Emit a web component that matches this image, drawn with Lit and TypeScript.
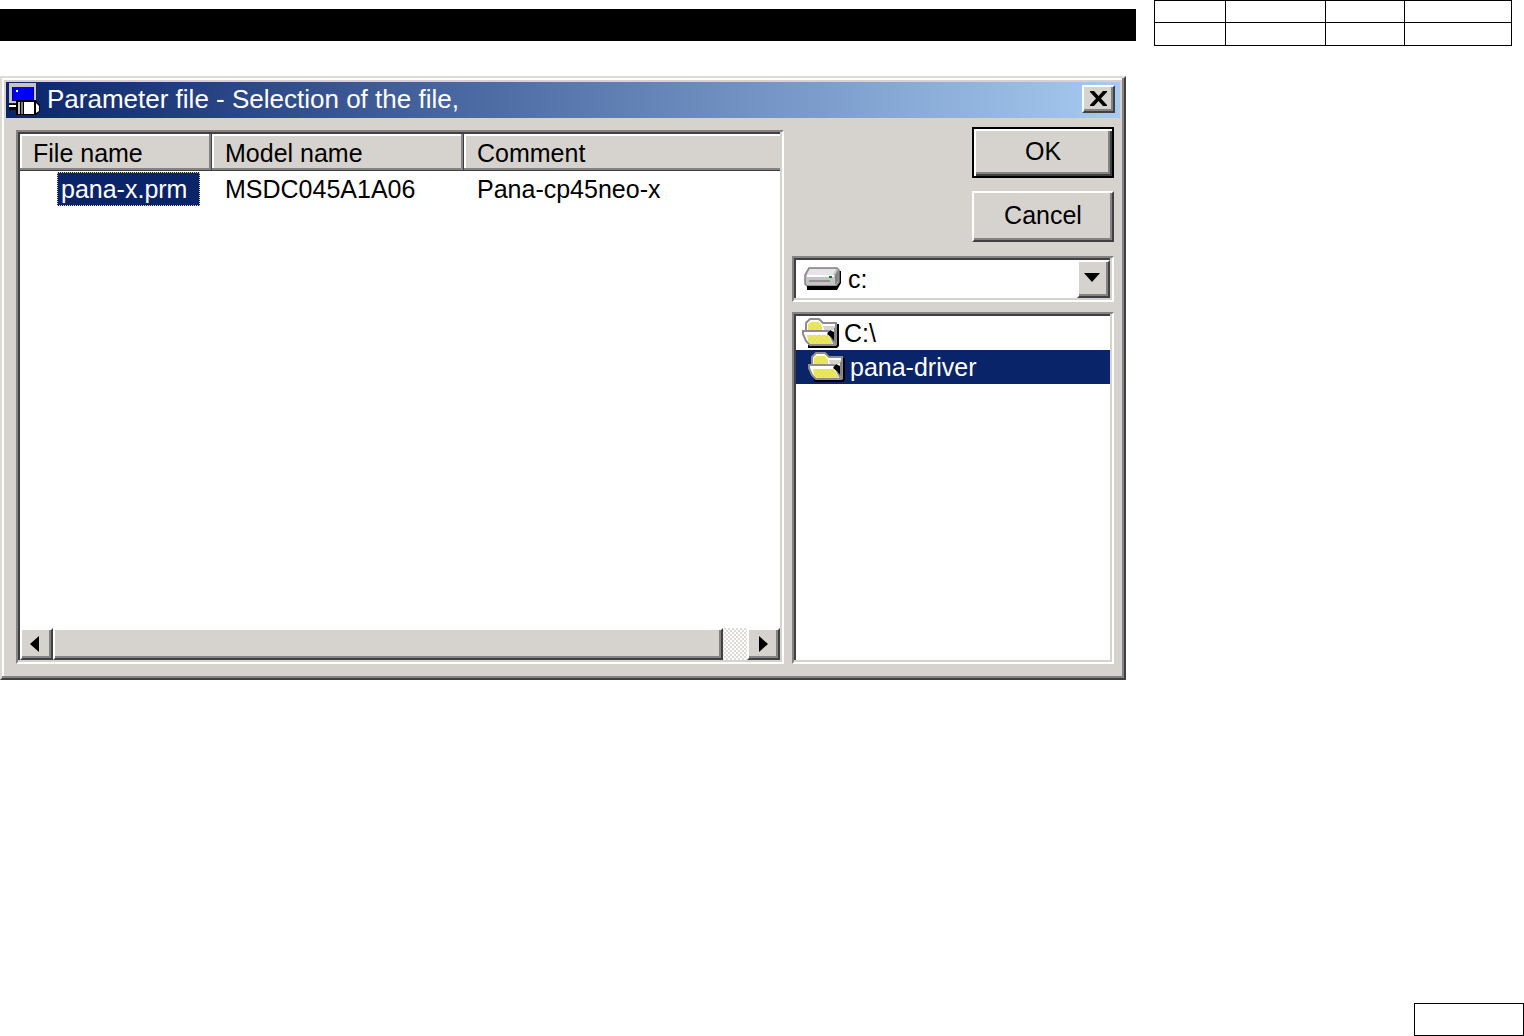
import { LitElement, html, css } from "lit";
import { customElement, property, state } from "lit/decorators.js";
import { classMap } from "lit/directives/class-map.js";

const bevels = css`
  .raised {
    background: #d6d3ce;
    border: 2px solid;
    border-color: #fff #404040 #404040 #fff;
    box-shadow: inset -2px -2px #848284;
  }
  .sunken {
    background: #fff;
    border: 2px solid;
    border-color: #848284 #fff #fff #848284;
    box-shadow: inset -2px -2px #d6d3ce, inset 2px 2px #404040;
    padding: 2px;
  }
  * {
    box-sizing: border-box;
  }
  button,
  select {
    font: inherit;
    color: inherit;
    margin: 0;
    border-radius: 0;
  }
  svg {
    display: block;
    flex: none;
  }
`;

@customElement("folder-icon")
class FolderIcon extends LitElement {
  static styles = css`
    :host {
      display: block;
      flex: none;
    }
    svg {
      display: block;
    }
  `;
  render() {
    return html`<svg width="37" height="30" viewBox="0 0 37 30" aria-hidden="true">
      <defs>
        <pattern id="dither" width="4.600" height="4.600" patternUnits="userSpaceOnUse">
          <rect width="4.600" height="4.600" fill="#f7f31c" />
          <rect width="2.300" height="2.300" fill="#d9d6a0" />
          <rect x="2.300" y="2.300" width="2.300" height="2.300" fill="#d9d6a0" />
        </pattern>
      </defs>
      <path d="M6 30V27h26V6h5v22l-2 2z" fill="#000" />
      <path d="M4 14V5l4-4h9l4 4h13v21H8z" fill="#fff" stroke="#8e8c8e" stroke-width="2" />
      <path d="M6 11V6l3-2h8l3 4v4H6z" fill="url(#dither)" />
      <path d="M21 8h12v4H22z" fill="#d6d3ce" />
      <path d="M32 10h2v14h-2z" fill="#848284" />
      <path d="M1 13h25l7 14H8l-4-4-3-7z" fill="#fff" stroke="#8e8c8e" stroke-width="2" />
      <path d="M5 17h21l5 9H9l-3-3z" fill="url(#dither)" />
      <path d="M28 12l4 2v9l-3-4-4-3z" fill="#000" />
    </svg>`;
  }
}

@customElement("win-scrollbar")
class WinScrollbar extends LitElement {
  static styles = [
    bevels,
    css`
      :host {
        display: flex;
        height: 32px;
        background: repeating-conic-gradient(#fff 0 25%, #dedbd6 0 50%) 0 0 / 4px 4px;
      }
      .arrow {
        width: 33px;
        padding: 0 4px 0 0;
        display: flex;
        align-items: center;
        justify-content: center;
      }
      .forward {
        padding: 0;
      }
      .thumb {
        flex: 1;
        margin-right: 24px;
      }
    `,
  ];
  render() {
    return html`
      <button class="raised arrow" aria-label="Scroll left">
        <svg width="9" height="16" viewBox="0 0 9 16"><path d="M9 0v16L0 8z" /></svg>
      </button>
      <div class="raised thumb"></div>
      <button class="raised arrow forward" aria-label="Scroll right">
        <svg width="9" height="16" viewBox="0 0 9 16"><path d="M0 0v16l9-8z" /></svg>
      </button>
    `;
  }
}

interface FileRow {
  name: string;
  model: string;
  comment: string;
}

@customElement("file-list")
class FileList extends LitElement {
  @property({ attribute: false }) files: FileRow[] = [];
  @state() private selected = 0;

  static styles = [
    bevels,
    css`
      :host {
        display: flex;
        min-width: 0;
      }
      .list {
        flex: 1;
        min-width: 0;
        min-height: 534px;
        display: flex;
        flex-direction: column;
      }
      .rows {
        flex: 1;
      }
      table {
        width: 100%;
        table-layout: fixed;
        border-collapse: collapse;
        line-height: 34px;
      }
      .name {
        width: 192px;
      }
      .model {
        width: 252px;
      }
      th {
        height: 37px;
        padding: 0 0 0 13px;
        text-align: left;
        font-weight: normal;
        background: #d6d3ce;
        box-shadow: inset -1px -1px #404040, inset -3px -3px #848284, inset 2px 2px #fff;
      }
      th:last-child {
        box-shadow: inset 0 -1px #404040, inset 0 -3px #848284, inset 2px 2px #fff;
      }
      td {
        height: 36px;
        padding: 0 0 0 13px;
      }
      .file {
        padding-left: 37px;
      }
      .pick {
        display: block;
        height: 34px;
        line-height: 32px;
        padding: 0 12px 0 3px;
        background: none;
        border: 1px dotted transparent;
        outline: none;
      }
      .pick.on {
        background: #0a246a;
        border: 1px dotted #f5db95;
        color: #fff;
      }
    `,
  ];

  render() {
    return html`<div class="sunken list">
      <div class="rows">
        <table>
          <thead>
            <tr>
              <th class="name">File name</th>
              <th class="model">Model name</th>
              <th>Comment</th>
            </tr>
          </thead>
          <tbody>
            ${this.files.map(
              (f, i) => html`<tr>
                <td class="file">
                  <button
                    class=${classMap({ pick: true, on: i === this.selected })}
                    @click=${() => (this.selected = i)}
                  >${f.name}</button>
                </td>
                <td>${f.model}</td>
                <td>${f.comment}</td>
              </tr>`
            )}
          </tbody>
        </table>
      </div>
      <win-scrollbar></win-scrollbar>
    </div>`;
  }
}

@customElement("location-picker")
class LocationPicker extends LitElement {
  @state() private current = 1;
  private folders = ["C:\\", "pana-driver"];

  static styles = [
    bevels,
    css`
      :host {
        flex: 1;
        display: flex;
        flex-direction: column;
        gap: 10px;
      }
      .drive {
        height: 46px;
        display: flex;
        align-items: center;
        padding-left: 10px;
      }
      .letter {
        flex: 1;
        min-width: 0;
        height: 38px;
        padding: 0 0 0 7px;
        appearance: none;
        border: none;
        outline: none;
        background: none;
      }
      .drop {
        width: 33px;
        height: 38px;
        padding: 0 4px 4px 0;
        display: flex;
        align-items: center;
        justify-content: center;
      }
      .tree {
        flex: 1;
        display: flex;
        flex-direction: column;
      }
      .folder {
        height: 34px;
        padding: 0 0 0 6px;
        display: flex;
        align-items: center;
        gap: 5px;
        border: none;
        outline: none;
        background: none;
        text-align: left;
      }
      .child {
        padding-left: 12px;
      }
      .on {
        background: #0a246a;
        color: #fff;
      }
    `,
  ];

  render() {
    return html`
      <div class="sunken drive">
        <svg width="37" height="24" viewBox="0 0 37 24" aria-hidden="true">
          <path d="M3 17h28l3-3V4h3v12l-4 7H3z" fill="#000" />
          <path d="M5 1h28l2 2v12l-3 4H3l-2-2V8z" fill="#c6c3c6" stroke="#848284" stroke-width="1.5" />
          <path d="M6 2h26l-3 6H3z" fill="#e6e4e6" />
          <path d="M3 9h27" stroke="#fff" stroke-width="2" />
          <path d="M5 14h21" stroke="#848284" stroke-width="1.5" />
          <path d="M31 8l3-5v11l-3 4z" fill="#848284" />
          <path d="M25 9h3v2h-3z" fill="#008a10" />
          <path d="M3 19h30v4H3z" fill="#000" />
        </svg>
        <select class="letter" aria-label="Drive">
          <option>c:</option>
        </select>
        <button class="raised drop" aria-label="Open drive list">
          <svg width="16" height="9" viewBox="0 0 16 9"><path d="M0 0h16L8 9z" /></svg>
        </button>
      </div>
      <div class="sunken tree">
        ${this.folders.map(
          (name, i) => html`<button
            class=${classMap({ folder: true, child: i > 0, on: i === this.current })}
            @click=${() => (this.current = i)}
          ><folder-icon></folder-icon><span>${name}</span></button>`
        )}
      </div>
    `;
  }
}

@customElement("app-root")
class AppRoot extends LitElement {
  private files: FileRow[] = [
    { name: "pana-x.prm", model: "MSDC045A1A06", comment: "Pana-cp45neo-x" },
  ];

  static styles = [
    bevels,
    css`
      :host {
        display: block;
        background: #fff;
        color: #000;
        font-family: "Liberation Sans", Arial, sans-serif;
        font-size: 25px;
      }
      .page {
        min-height: 100vh;
        display: flex;
        flex-direction: column;
      }
      .main {
        display: grid;
        grid-template-columns: minmax(0, 1fr) 358px;
        column-gap: 18px;
        row-gap: 30px;
        padding-right: 12px;
      }
      .band {
        height: 32px;
        margin-top: 9px;
        background: #000;
      }
      .stamp {
        width: 100%;
        table-layout: fixed;
        border-collapse: collapse;
      }
      .stamp td {
        height: 23px;
        padding: 0;
        border: 1px solid #000;
      }
      .stamp tr:first-child td {
        height: 22px;
      }
      .c1 {
        width: 71px;
      }
      .c2 {
        width: 100px;
      }
      .c3 {
        width: 79px;
      }
      .dialog {
        margin-right: 10px;
        background: #d6d3ce;
        border: 2px solid;
        border-color: #dedbd6 #404040 #404040 #dedbd6;
        box-shadow: inset -2px -2px #848284, inset 2px 2px #fff;
        padding: 4px;
      }
      .title {
        height: 36px;
        display: flex;
        align-items: center;
        gap: 7px;
        padding: 0 5px 2px 3px;
        background: linear-gradient(90deg, #0a246a, #a6caf0);
        color: #fff;
      }
      h1 {
        flex: 1;
        margin: 0;
        font-size: 26px;
        line-height: 32px;
        font-weight: normal;
        white-space: nowrap;
      }
      .close {
        width: 33px;
        height: 28px;
        padding: 0 1px 2px 0;
        display: flex;
        align-items: center;
        justify-content: center;
      }
      .body {
        display: flex;
        gap: 8px;
        padding: 9px 6px 10px 10px;
      }
      .files {
        flex: 1;
        margin-top: 3px;
      }
      .side {
        width: 322px;
        display: flex;
        flex-direction: column;
      }
      .actions {
        display: flex;
        flex-direction: column;
        align-items: flex-end;
        gap: 13px;
        margin-bottom: 14px;
      }
      .action {
        width: 142px;
        height: 51px;
        padding: 0 0 2px;
      }
      .default {
        border-color: #000;
        box-shadow: inset 2px 2px #fff, inset -2px -2px #404040, inset -4px -4px #848284;
      }
      .foot {
        width: 110px;
        height: 33px;
        margin: auto 0 0 auto;
        border: 1px solid #000;
      }
    `,
  ];

  render() {
    return html`<div class="page">
      <div class="main">
        <div class="band"></div>
        <table class="stamp">
          <colgroup>
            <col class="c1" /><col class="c2" /><col class="c3" /><col />
          </colgroup>
          <tbody>
            <tr><td></td><td></td><td></td><td></td></tr>
            <tr><td></td><td></td><td></td><td></td></tr>
          </tbody>
        </table>
        <section class="dialog">
          <header class="title">
            <svg width="31" height="32" viewBox="0 0 31 32" aria-hidden="true">
              <path d="M0 0h27v20H0z" fill="#c6c3c6" />
              <path d="M3 4h22v14H3z" fill="#000084" />
              <path d="M4 4h20v13H4z" fill="#00f" />
              <path d="M7 7h2v2H7z" fill="#fff" />
              <path d="M0 21h8v6H0z" fill="#000" />
              <path d="M0 22h7v2H0z" fill="#fff" />
              <path d="M7 17h20l1 2 3 3v6l-3 3-1 1H7z" fill="#000" />
              <path d="M9 19h2v12H9z" fill="#c6c3c6" />
              <path d="M12 19h2v12h-2z" fill="#848284" />
              <path d="M15 19h10v12H15z" fill="#fff" />
              <path d="M27 20l3 3v5l-3 2z" fill="#fff" />
            </svg>
            <h1>Parameter file - Selection of the file,</h1>
            <button class="raised close" aria-label="Close">
              <svg width="17" height="15" viewBox="0 0 17 15">
                <path d="M0 0h4l4.500 5L13 0h4v1l-6 6.500 6 6.500v1h-4l-4.500-5L4 15H0v-1l6-6.500L0 1z" />
              </svg>
            </button>
          </header>
          <div class="body">
            <file-list class="files" .files=${this.files}></file-list>
            <div class="side">
              <div class="actions">
                <button class="raised action default">OK</button>
                <button class="raised action">Cancel</button>
              </div>
              <location-picker></location-picker>
            </div>
          </div>
        </section>
      </div>
      <div class="foot"></div>
    </div>`;
  }
}
